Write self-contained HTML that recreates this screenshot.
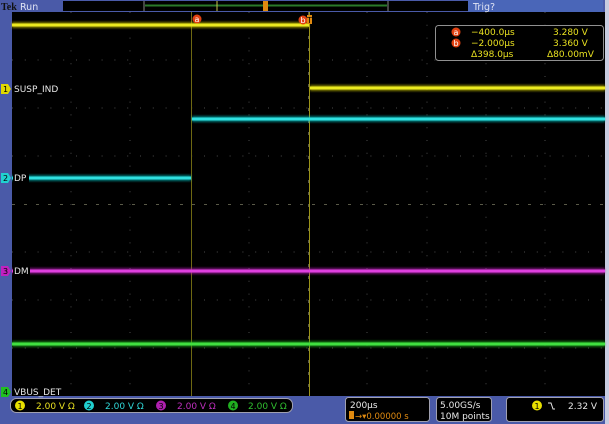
<!DOCTYPE html>
<html><head><style>
html,body{margin:0;padding:0;background:#4a5aa8;}
svg{display:block;}
text{font-family:"DejaVu Sans","Liberation Sans",sans-serif;}
</style></head><body>
<svg width="609" height="424" viewBox="0 0 609 424" xmlns="http://www.w3.org/2000/svg">
<defs>
<filter id="g" x="-1%" y="-200%" width="102%" height="500%"><feGaussianBlur stdDeviation="1"/></filter>
</defs>
<rect x="0" y="0" width="609" height="424" fill="#4a5aa8"/>
<rect x="605" y="0" width="4" height="424" fill="#c8cce0"/>
<!-- top bar -->
<text x="1" y="10" font-size="10" font-weight="bold" fill="#111" style="font-family:'Liberation Serif',serif">Tek</text>
<text x="20" y="10" font-size="9.5" fill="#e0e4f4">Run</text>
<rect x="63" y="1" width="405" height="10" fill="#000"/>
<line x1="144" y1="1" x2="144" y2="11" stroke="#888" stroke-width="1"/>
<line x1="388" y1="1" x2="388" y2="11" stroke="#888" stroke-width="1"/>
<line x1="145" y1="5.5" x2="387" y2="5.5" stroke="#2a7a2a" stroke-width="2"/>
<line x1="217" y1="1" x2="217" y2="11" stroke="#c9c34a" stroke-width="1"/>
<rect x="263" y="1" width="5" height="10" fill="#e08a10"/>
<rect x="468" y="0" width="135" height="12" fill="#4a66b8"/>
<text x="473" y="10" font-size="9.5" fill="#e0e4f4">Trig?</text>
<!-- screen -->
<rect x="12" y="12" width="593" height="384" fill="#000"/>
<g stroke="#4a4a4a" stroke-width="1" stroke-dasharray="1 11.8">
<line x1="71" y1="12" x2="71" y2="396"/><line x1="130" y1="12" x2="130" y2="396"/>
<line x1="249" y1="12" x2="249" y2="396"/>
<line x1="367" y1="12" x2="367" y2="396"/><line x1="427" y1="12" x2="427" y2="396"/>
<line x1="486" y1="12" x2="486" y2="396"/><line x1="545" y1="12" x2="545" y2="396"/>
<line x1="12" y1="60" x2="605" y2="60"/><line x1="12" y1="108" x2="605" y2="108"/>
<line x1="12" y1="156" x2="605" y2="156"/><line x1="12" y1="252" x2="605" y2="252"/>
<line x1="12" y1="300" x2="605" y2="300"/><line x1="12" y1="348" x2="605" y2="348"/>
</g>
<g stroke="#5a5a48" stroke-width="1" stroke-dasharray="3 9">
<line x1="12" y1="204.5" x2="605" y2="204.5"/>
<line x1="308.5" y1="12" x2="308.5" y2="396"/>
</g>
<!-- cursors -->
<line x1="191.5" y1="12" x2="191.5" y2="396" stroke="#6e6812" stroke-width="1"/>
<line x1="309.5" y1="12" x2="309.5" y2="396" stroke="#9a9218" stroke-width="1"/>
<!-- traces -->
<g filter="url(#g)" opacity="0.6" stroke-width="6" fill="none">
<path d="M12 25 H309 M310 88 H605" stroke="#d8d000"/>
<path d="M12 178 H191 M192 119 H605" stroke="#00c8c8"/>
<path d="M12 271 H605" stroke="#c020c0"/>
<path d="M12 344 H605" stroke="#20c020"/>
</g>
<g stroke-width="3" fill="none">
<path d="M12 25 H309 M310 88 H605" stroke="#ecea20"/>
<path d="M12 178 H191 M192 119 H605" stroke="#30e0e0"/>
<path d="M12 271 H605" stroke="#e040e0"/>
<path d="M12 344 H605" stroke="#40e040"/>
</g>
<!-- cursor labels -->
<circle cx="197" cy="19" r="4.5" fill="#e04010"/><text x="194.5" y="22" font-size="8" fill="#fff">a</text>
<circle cx="303" cy="20" r="4.5" fill="#e04010"/><text x="300.5" y="23" font-size="8" fill="#fff">b</text>
<rect x="307" y="15" width="5" height="9" fill="#e08a10"/><text x="307" y="23" font-size="8" fill="#000">T</text>
<!-- readout box -->
<rect x="435.5" y="25.5" width="168" height="35" rx="3" fill="#000" stroke="#909090"/>
<circle cx="456" cy="32" r="4.5" fill="#e04010"/><text x="453.5" y="35" font-size="8" fill="#fff">a</text>
<circle cx="456" cy="43" r="4.5" fill="#e04010"/><text x="453.5" y="46" font-size="8" fill="#fff">b</text>
<g font-size="9" fill="#e8e020">
<text x="471" y="35">−400.0µs</text><text x="553" y="35">3.280 V</text>
<text x="471" y="46">−2.000µs</text><text x="553" y="46">3.360 V</text>
<text x="471" y="57">Δ398.0µs</text><text x="547" y="57">Δ80.00mV</text>
</g>
<!-- channel labels -->
<g font-size="9">
<path d="M1 84 H8 L11 89 L8 94 H1Z" fill="#e0d800"/><text x="3" y="92" fill="#000" font-size="8">1</text>
<text x="14" y="92" fill="#e8e8e8">SUSP_IND</text>
<path d="M1 173 H8 L11 178 L8 183 H1Z" fill="#20d0d0"/><text x="3" y="181" fill="#000" font-size="8">2</text>
<rect x="13" y="173" width="16" height="10" fill="#000"/><text x="14" y="181" fill="#e8e8e8">DP</text>
<path d="M1 266 H8 L11 271 L8 276 H1Z" fill="#c020c0"/><text x="3" y="274" fill="#000" font-size="8">3</text>
<rect x="13" y="266" width="17" height="10" fill="#000"/><text x="14" y="274" fill="#e8e8e8">DM</text>
<path d="M1 387 H8 L11 392 L8 397 H1Z" fill="#20c020"/><text x="3" y="395" fill="#000" font-size="8">4</text>
<text x="14" y="395" fill="#e8e8e8">VBUS_DET</text>
</g>
<!-- bottom bar -->
<rect x="10.5" y="398.5" width="282" height="14" rx="6" fill="#000" stroke="#a0a0b0"/>
<g font-size="9">
<circle cx="20" cy="405.5" r="5" fill="#e8e000"/><text x="17.5" y="409" fill="#000" font-size="8">1</text>
<text x="36" y="409" fill="#e8e020">2.00 V  Ω</text>
<circle cx="89" cy="405.5" r="5" fill="#20d0d0"/><text x="86.5" y="409" fill="#000" font-size="8">2</text>
<text x="105" y="409" fill="#30d8d8">2.00 V  Ω</text>
<circle cx="161" cy="405.5" r="5" fill="#b020b0"/><text x="158.5" y="409" fill="#000" font-size="8">3</text>
<text x="177" y="409" fill="#c030c0">2.00 V  Ω</text>
<circle cx="233" cy="405.5" r="5" fill="#20b020"/><text x="230.5" y="409" fill="#000" font-size="8">4</text>
<text x="248" y="409" fill="#30c030">2.00 V  Ω</text>
</g>
<rect x="345.5" y="397.5" width="84" height="24" rx="3" fill="#000" stroke="#a0a0b0"/>
<text x="350" y="408" font-size="9" fill="#e8e8e8">200µs</text>
<rect x="349" y="411" width="5" height="8" fill="#e08a10"/>
<text x="355" y="419" font-size="8.5" fill="#e08a10">→▾0.00000 s</text>
<rect x="436.5" y="397.5" width="55" height="24" rx="3" fill="#000" stroke="#a0a0b0"/>
<text x="440" y="408" font-size="9" fill="#e8e8e8">5.00GS/s</text>
<text x="440" y="419" font-size="9" fill="#e8e8e8">10M points</text>
<rect x="506.5" y="397.5" width="97" height="24" rx="3" fill="#000" stroke="#a0a0b0"/>
<circle cx="537" cy="405.5" r="5" fill="#e8e000"/><text x="534.5" y="409" fill="#000" font-size="8">1</text>
<path d="M548 403 H551 L553 409 H555" stroke="#e8e8e8" fill="none" stroke-width="1"/>
<text x="568" y="409" font-size="9" fill="#e8e8e8">2.32 V</text>
</svg>
</body></html>
